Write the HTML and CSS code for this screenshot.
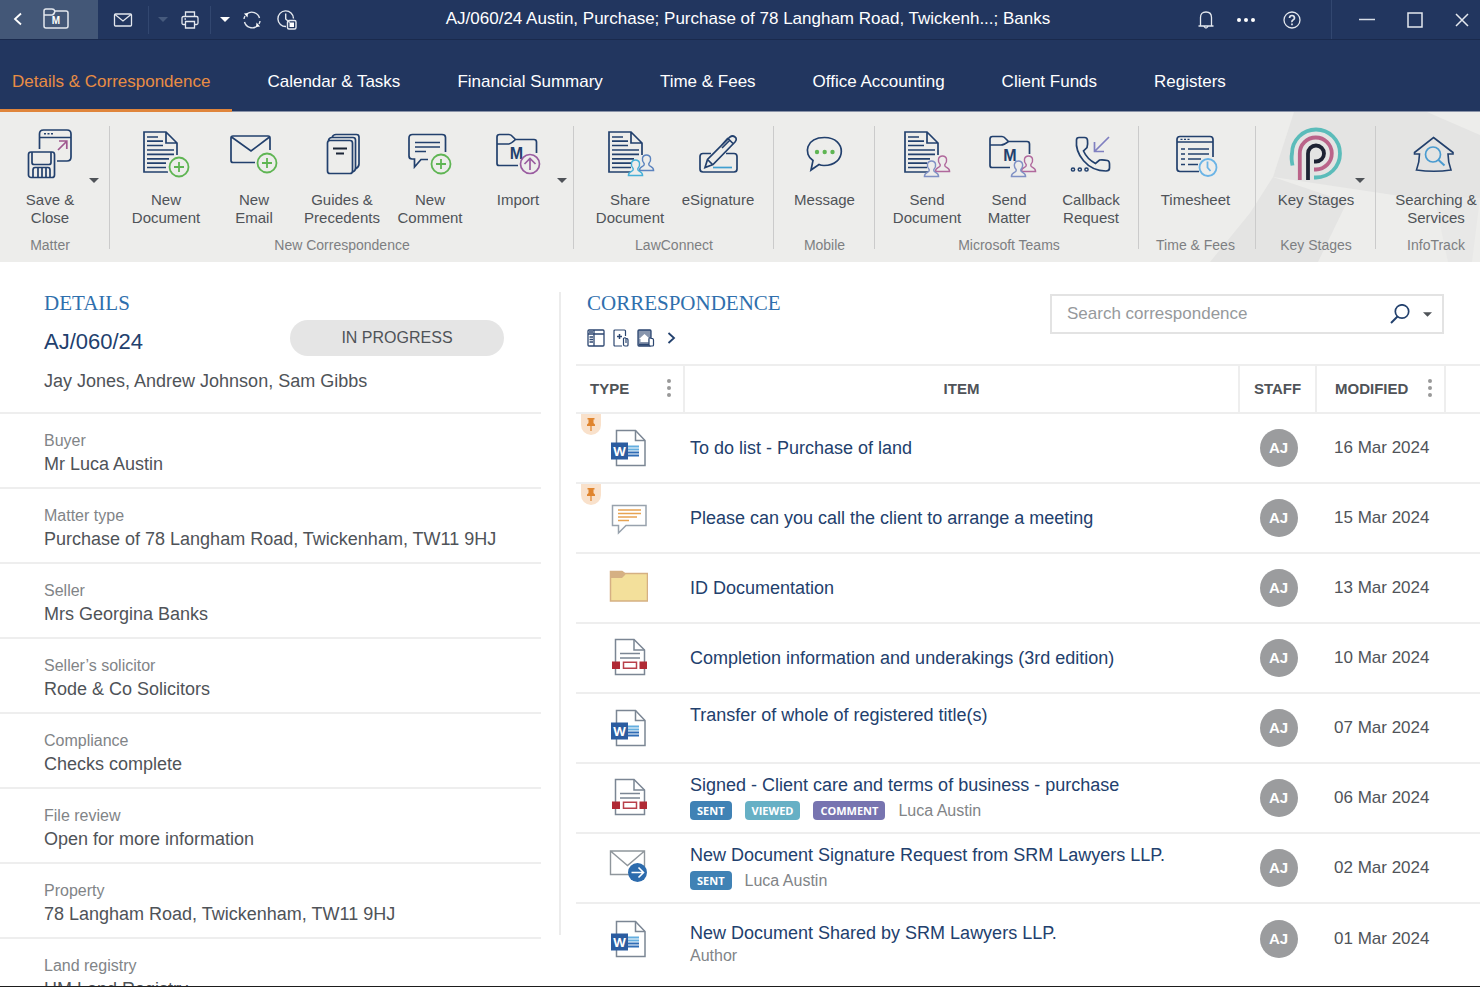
FILE: index.html
```html
<!DOCTYPE html>
<html lang="en">
<head>
<meta charset="utf-8">
<meta name="viewport" content="width=device-width, initial-scale=1">
<title>AJ/060/24 Austin, Purchase</title>
<link rel="stylesheet" href="styles.css">
</head>
<body>
<svg class="sprite" aria-hidden="true">
  <symbol id="caret" viewBox="0 0 10 5"><path d="M0 0H10L5 5Z" fill="currentColor"/></symbol>
  <symbol id="dots" viewBox="0 0 4 20"><g fill="#999"><circle cx="2" cy="3" r="2"/><circle cx="2" cy="10" r="2"/><circle cx="2" cy="17" r="2"/></g></symbol>
  <symbol id="page" viewBox="0 0 56 56"><g fill="none" stroke="#22406d" stroke-width="1.700"><path d="M30 46H6V6H28L39 17V29M28 6V17H39"/><path d="M9 11H20M9 15.200H25M9 19.500H25M9 24H36M9 28.400H36M9 32.800H31M9 37.200H28M9 41.500H28"/></g></symbol>
  <symbol id="plus" viewBox="0 0 22 22"><g fill="none" stroke="#5fb553" stroke-width="1.800"><circle cx="11" cy="11" r="9.500"/><path d="M11 6V16M6 11H16"/></g></symbol>
  <symbol id="person" viewBox="0 0 18 20"><path d="M6.500 12.500V11C3.500 8 4 2 9 2S14.500 8 11.500 11V12.500C12 14.500 16.500 14 16.500 18.500H1.500C1.500 14 6 14.500 6.500 12.500Z" fill="#ededeb" stroke="currentColor" stroke-width="1.500"/></symbol>
  <symbol id="word" viewBox="0 0 40 40"><path d="M8.500 2.500H27.500L37 12.500V37.500H8.500Z" fill="#fff" stroke="#7b8694" stroke-width="1.500"/><path d="M27.500 2.500V12.500H37" fill="none" stroke="#7b8694" stroke-width="1.500"/><path d="M20 18.500H31M20 21.500H31" stroke="#64aee0" stroke-width="1.800"/><path d="M20 24.500H31M20 27.500H31" stroke="#2f6cb5" stroke-width="1.800"/><path d="M3 14.500H20V31.500H3Z" fill="#2b5ca0"/><text x="11.500" y="27.500" text-anchor="middle" class="glyph-w">W</text></symbol>
  <symbol id="pdf" viewBox="0 0 40 40"><path d="M7.500 1.500H26L36.500 12V36.500H7.500Z" fill="#fff" stroke="#7b8694" stroke-width="1.500"/><path d="M26 1.500V12H36.500M12 15.500H32M12 20H32" fill="none" stroke="#7b8694" stroke-width="1.500"/><path d="M4 23.500H12V31H4ZM31.500 23.500H39V31H31.500Z" fill="#b02a35"/><path d="M15.500 24.200H28.500V30.200H15.500Z" fill="#fff" stroke="#b9404a" stroke-width="1.500"/></symbol>
  <symbol id="pin" viewBox="0 0 20 21"><path d="M0 0H20V11A10 10 0 0 1 0 11Z" fill="#f9e1cb"/><path d="M6.500 4H13.500V5.500H12.500V9L14 10.500V12H6V10.500L7.500 9V5.500H6.500ZM9.400 12H10.600V17H9.400Z" fill="#e0852f"/></symbol>
</svg>

<header class="titlebar">
  <div class="tools">
    <div class="matter-tab">
      <button class="tool back" aria-label="Back"><svg width="10" height="14" viewBox="0 0 10 14"><path d="M8 1.500L2 7l6 5.500" fill="none" stroke="#fff" stroke-width="1.800"/></svg></button>
      <button class="tool matter" aria-label="Matter"><svg width="26" height="22" viewBox="0 0 26 22"><g fill="none" stroke="#e4e8ee" stroke-width="1.500"><path d="M1 7V3Q1 1 3 1H9Q11 1 12 3H23Q25 3 25 5V18Q25 20 23 20H3Q1 20 1 18V7H9Q11 7 12 3"/></g><text x="13" y="16" text-anchor="middle" class="glyph-m small">M</text></svg></button>
    </div>
    <button class="tool mail" aria-label="Email"><svg width="20" height="14" viewBox="0 0 20 14"><g fill="none" stroke="#e4e8ee" stroke-width="1.300"><rect x="1.500" y="1" width="17" height="12" rx="1"/><path d="M2 1.500l8 6.500 8-6.500"/></g></svg></button>
    <span class="rule"></span>
    <button class="tool menu dim" aria-label="Email options"><svg width="10" height="5"><use href="#caret"/></svg></button>
    <button class="tool" aria-label="Print"><svg width="18" height="18" viewBox="0 0 18 18"><g fill="none" stroke="#e4e8ee" stroke-width="1.300"><path d="M4.500 5.500V1h9v4.500M4 13.500H2.500Q1 13.500 1 12V7q0-1.500 1.500-1.500h13Q17 5.500 17 7v5q0 1.500-1.500 1.500H14M4.500 10.500h9v6.500h-9zM3.500 8h1.500"/></g></svg></button>
    <span class="rule spaced"></span>
    <button class="tool" aria-label="Print options"><svg width="10" height="5"><use href="#caret"/></svg></button>
    <button class="tool" aria-label="Refresh"><svg width="20" height="20" viewBox="0 0 20 20"><g fill="none" stroke="#e4e8ee" stroke-width="1.400"><path d="M5 3.800A8 8 0 0 1 17.500 8M15 16.200A8 8 0 0 1 2.500 12M2 9A8 8 0 0 1 3 6M18 11A8 8 0 0 1 17 14"/></g><path d="M2 3.500l4-.5-.5 4.500zM18 16.500l-4 .5.500-4.500z" fill="#fff"/></svg></button>
    <button class="tool timer" aria-label="Timer"><svg width="20" height="20" viewBox="0 0 20 20"><g fill="none" stroke="#e4e8ee" stroke-width="1.400"><path d="M9 16.500A7.800 7.800 0 1 1 16.500 8.500M8.700 3.500V9l4 3.500"/><rect x="10.500" y="10.500" width="8.500" height="8.500" rx="1.500"/></g><path d="M12.500 12.500h4.500V17h-4.500z" fill="#fff"/></svg></button>
  </div>
  <h1 class="window-title">AJ/060/24 Austin, Purchase; Purchase of 78 Langham Road, Twickenh...; Banks</h1>
  <div class="tools end">
    <button class="tool bell" aria-label="Notifications"><svg width="16" height="18" viewBox="0 0 16 18"><g fill="none" stroke="#e4e8ee" stroke-width="1.300"><path d="M2.500 15V6.500Q2.500 1 8 1t5.500 5.500V15M.5 15h15M6 15.500q2 3 4 0"/></g></svg></button>
    <button class="tool wide" aria-label="More"><svg width="18" height="4" viewBox="0 0 18 4"><g fill="#fff"><circle cx="2" cy="2" r="2"/><circle cx="9" cy="2" r="2"/><circle cx="16" cy="2" r="2"/></g></svg></button>
    <button class="tool wide" aria-label="Help"><svg width="18" height="18" viewBox="0 0 18 18"><g fill="none" stroke="#e4e8ee"><circle cx="9" cy="9" r="8" stroke-width="1.300"/><path d="M6.500 7q.2-2.500 2.500-2.500T11.500 7Q11.500 8.200 10 9T9 11.200M9 12.500v1.800" stroke-width="1.700"/></g></svg></button>
    <span class="rule full"></span>
    <button class="tool wide" aria-label="Minimise"><svg width="16" height="16" viewBox="0 0 16 16"><path d="M0 7.500h16" stroke="#d8dee7" stroke-width="1.500"/></svg></button>
    <button class="tool max" aria-label="Maximise"><svg width="16" height="16" viewBox="0 0 16 16"><path d="M1 1h14v14H1z" fill="none" stroke="#e4e8ee" stroke-width="1.500"/></svg></button>
    <button class="tool close" aria-label="Close"><svg width="14" height="14" viewBox="0 0 14 14"><path d="M1 1l12 12M13 1L1 13" stroke="#e4e8ee" stroke-width="1.500"/></svg></button>
  </div>
</header>

<nav class="tabs" aria-label="Matter sections">
  <a class="tab active" href="#details" aria-current="page">Details &amp; Correspondence</a>
  <a class="tab" href="#calendar">Calendar &amp; Tasks</a>
  <a class="tab" href="#financial">Financial Summary</a>
  <a class="tab" href="#time">Time &amp; Fees</a>
  <a class="tab" href="#office">Office Accounting</a>
  <a class="tab" href="#client">Client Funds</a>
  <a class="tab" href="#registers">Registers</a>
</nav>

<section class="ribbon" aria-label="Ribbon">
  <svg class="ribbon-art" width="270" height="150" viewBox="0 0 270 150" aria-hidden="true"><g fill="#e4e4e3"><path d="M84 0H217L270 23V88L190 84 63 65Z"/><path d="M63 65L137 90 108 150H0L40 101Z"/><path d="M224 84L270 86 262 150H238Z" fill="#e8e8e7"/></g></svg>

  <div class="group g-matter">
    <div class="actions">
      <div class="action">
        <button class="action-main"><svg width="56" height="56" viewBox="0 0 56 56"><g fill="none" stroke="#22406d" stroke-width="1.700"><path d="M17.500 23V8Q17.500 4 21.500 4H45Q49 4 49 8V31Q49 35 45 35H35M18 11.500H48.500"/><path d="M22 7.800H31" stroke-dasharray="2 1.500" stroke-width="1.400"/><rect x="6.500" y="26" width="26" height="25.500" rx="2.500"/><path d="M10 26V36.500Q10 38.500 12 38.500H27Q29 38.500 29 36.500V26M11 51V44Q11 41.500 13 41.500H26Q28 41.500 28 44V51M16 42V51M20 42V51M24 42V51"/></g><path d="M36 24L44.500 15.500M37 15H44.800V23" fill="none" stroke="#a0588f" stroke-width="1.700"/></svg><span>Save &amp;<br>Close</span></button>
        <button class="drop" aria-label="Save options"><svg width="10" height="5"><use href="#caret"/></svg></button>
      </div>
    </div>
    <p class="group-name">Matter</p>
  </div>

  <div class="group">
    <div class="actions">
      <div class="action"><button class="action-main"><svg width="56" height="56" viewBox="0 0 56 56"><use href="#page" width="56" height="56"/><circle cx="41" cy="41" r="12" fill="#ededeb"/><use href="#plus" x="30" y="30" width="22" height="22"/></svg><span>New<br>Document</span></button></div>
      <div class="action"><button class="action-main"><svg width="56" height="56" viewBox="0 0 56 56"><path d="M29 36.500H7Q5 36.500 5 34.500V12Q5 10 7 10H42Q44 10 44 12V24M5.500 11L25 25 43.500 11" fill="none" stroke="#22406d" stroke-width="1.700"/><use href="#plus" x="30" y="26" width="22" height="22"/></svg><span>New<br>Email</span></button></div>
      <div class="action"><button class="action-main"><svg width="56" height="56" viewBox="0 0 56 56"><g fill="none" stroke="#22406d" stroke-width="1.700"><rect x="13.500" y="14.500" width="25" height="33" rx="2.500"/><path d="M14.500 14.500Q15 11.500 18 11.500H39Q41.500 11.500 41.500 14V42Q41.500 45 38.500 46M18 11.500Q19 8.500 22 8.500H42.500Q45 8.500 45 11V38Q45 41 41.500 43"/></g><path d="M19 22.500H33M22 27.500H30" stroke="#1b2536" stroke-width="1.800"/></svg><span>Guides &amp;<br>Precedents</span></button></div>
      <div class="action"><button class="action-main"><svg width="56" height="56" viewBox="0 0 56 56"><path d="M43.500 26V11.500Q43.500 8.500 40 8.500H10.500Q7 8.500 7 12V30Q7 33 10 33H12.500V41L19 33.500H26M13 16.500H38M13 21H38M13 25.500H24" fill="none" stroke="#22406d" stroke-width="1.700"/><use href="#plus" x="28" y="27" width="22" height="22"/></svg><span>New<br>Comment</span></button></div>
      <div class="action">
        <button class="action-main"><svg width="56" height="56" viewBox="0 0 56 56"><path d="M28 39.500H9Q7 39.500 7 37.500V11Q7 8.500 9.500 8.500H19Q21 8.500 23 11L25.500 13.500H44Q46.500 13.500 46.500 16V27M7 18H18Q21 18 25.500 13.500" fill="none" stroke="#22406d" stroke-width="1.700"/><text x="26.500" y="32.500" text-anchor="middle" class="glyph-m">M</text><circle cx="40" cy="38" r="9.500" fill="#ededeb" stroke="#9a5ca0" stroke-width="1.700"/><path d="M40 44V32.500M34.500 38L40 32.500 45.500 38" fill="none" stroke="#9a5ca0" stroke-width="1.700"/></svg><span>Import</span></button>
        <button class="drop" aria-label="Import options"><svg width="10" height="5"><use href="#caret"/></svg></button>
      </div>
    </div>
    <p class="group-name">New Correspondence</p>
  </div>

  <div class="group">
    <div class="actions">
      <div class="action"><button class="action-main"><svg width="56" height="56" viewBox="0 0 56 56"><use href="#page" x="1" width="56" height="56"/><use href="#person" x="36" y="27" width="17" height="19" color="#5b83be"/><use href="#person" x="25" y="32" width="17" height="19" color="#45b0d8"/></svg><span>Share<br>Document</span></button></div>
      <div class="action"><button class="action-main"><svg width="56" height="56" viewBox="0 0 56 56"><g fill="none" stroke="#22406d" stroke-width="1.700"><path d="M21 27.500H13Q10 27.500 10 30.500V43Q10 46 13 46H44Q47 46 47 43V30.500Q47 27.500 44 27.500H36"/><path d="M15 41.500L17.500 33.500 40 11Q42.500 9 45 11T45 16L23 38.500ZM17.500 33.500L22.500 38.500M30 21L38 12M38 12.500L43 17.500M32 22L40 14"/></g><path d="M23 41.500H42" stroke="#3f9fd0" stroke-width="1.700"/></svg><span>eSignature</span></button></div>
    </div>
    <p class="group-name">LawConnect</p>
  </div>

  <div class="group">
    <div class="actions">
      <div class="action"><button class="action-main"><svg width="56" height="56" viewBox="0 0 56 56"><path d="M16 34.500C6 28 9 11.500 27.500 11.500C50 11.500 50 39.500 27 39.500Q24 39.500 22 38.500L14 44Z" fill="none" stroke="#22406d" stroke-width="1.700"/><g fill="#5fb553"><circle cx="20" cy="26" r="2.200"/><circle cx="27.700" cy="26" r="2.200"/><circle cx="35.500" cy="26" r="2.200"/></g></svg><span>Message</span></button></div>
    </div>
    <p class="group-name">Mobile</p>
  </div>

  <div class="group g-teams">
    <div class="actions">
      <div class="action"><button class="action-main"><svg width="56" height="56" viewBox="0 0 56 56"><use href="#page" width="56" height="56"/><use href="#person" x="35" y="28" width="17" height="19" color="#b0689c"/><use href="#person" x="24" y="33" width="17" height="19" color="#7f90c4"/></svg><span>Send<br>Document</span></button></div>
      <div class="action"><button class="action-main"><svg width="56" height="56" viewBox="0 0 56 56"><path d="M29 41.500H11Q9 41.500 9 39.500V13Q9 10.500 11.500 10.500H21Q23 10.500 25 13L27.500 15.500H46Q48.500 15.500 48.500 18V28M9 19H20Q23 19 27.500 15.500" fill="none" stroke="#22406d" stroke-width="1.700"/><text x="29" y="35" text-anchor="middle" class="glyph-m">M</text><use href="#person" x="39" y="28" width="17" height="19" color="#b0689c"/><use href="#person" x="29" y="33" width="17" height="19" color="#7f90c4"/></svg><span>Send<br>Matter</span></button></div>
      <div class="action"><button class="action-main"><svg width="56" height="56" viewBox="0 0 56 56"><path d="M16 11.500H21.500Q24.500 11.500 24.500 14.500Q25 18 24 21.500L20.500 25Q24 33 32.500 37.500L36.500 34Q40 33.500 44.500 34.500Q46.500 35 46.500 38V42Q46.500 45 43 45C24 45 12 28 13.500 14Q13.500 11.500 16 11.500Z" fill="none" stroke="#22406d" stroke-width="1.700"/><path d="M46 11L32 25M31.500 16V25.500H41" fill="none" stroke="#7f7fc0" stroke-width="1.700"/><g fill="none" stroke="#22406d" stroke-width="1.500"><circle cx="10" cy="43.500" r="1.600"/><circle cx="16.800" cy="43.500" r="1.600"/><circle cx="23.500" cy="43.500" r="1.600"/></g></svg><span>Callback<br>Request</span></button></div>
    </div>
    <p class="group-name">Microsoft Teams</p>
  </div>

  <div class="group g-time">
    <div class="actions">
      <div class="action"><button class="action-main"><svg width="56" height="56" viewBox="0 0 56 56"><g fill="none" stroke="#22406d" stroke-width="1.700"><path d="M31 45.500H12Q9 45.500 9 42.500V13.500Q9 10.500 12 10.500H42Q45 10.500 45 13.500V31M9 16H45"/><path d="M12.500 13.300H22" stroke-dasharray="2 1.500" stroke-width="1.300"/><path d="M13 23H17M20 23H41M13 28H17M20 28H41M13 33H17M20 33H33M13 38.500H17M20 38.500H30"/></g><circle cx="40" cy="41.500" r="8.500" fill="#ededeb" stroke="#6bb4e6" stroke-width="1.800"/><path d="M39.500 35.500V41.500L42.500 45" fill="none" stroke="#6bb4e6" stroke-width="1.800"/></svg><span>Timesheet</span></button></div>
    </div>
    <p class="group-name">Time &amp; Fees</p>
  </div>

  <div class="group">
    <div class="actions">
      <div class="action">
        <button class="action-main"><svg width="56" height="56" viewBox="0 0 56 56"><g fill="none" stroke-width="3.800"><path d="M4.500 39.500Q3 32 4 27.500A24 24 0 1 1 28 51.500H26" stroke="#5bbcba"/><path d="M11.800 54V27.500A16 16 0 1 1 28 43.500H26" stroke="#ba6389"/><path d="M20 54V27.500A8 8 0 1 1 28 35.500H26" stroke="#1d2233"/></g></svg><span>Key Stages</span></button>
        <button class="drop" aria-label="Key stage options"><svg width="10" height="5"><use href="#caret"/></svg></button>
      </div>
    </div>
    <p class="group-name">Key Stages</p>
  </div>

  <div class="group g-info">
    <div class="actions">
      <div class="action"><button class="action-main"><svg width="56" height="56" viewBox="0 0 56 56"><path d="M25.500 11.500L45 26.500V28H40Q40 36 43 44Q26 46.500 8.500 44Q11.500 36 11.500 28H6.500V26.500Z" fill="none" stroke="#22406d" stroke-width="1.600"/><circle cx="25" cy="28.500" r="7.500" fill="none" stroke="#4a9bd0" stroke-width="1.700"/><path d="M30.500 34L36.500 39.500" stroke="#4a9bd0" stroke-width="2"/></svg><span>Searching &amp;<br>Services</span></button></div>
    </div>
    <p class="group-name">InfoTrack</p>
  </div>
</section>

<main class="workspace">
  <section class="details" id="details">
    <div class="summary">
      <h2 class="section-title">DETAILS</h2>
      <div class="matter-line"><strong class="matter-no">AJ/060/24</strong><span class="status">IN PROGRESS</span></div>
      <p class="people">Jay Jones, Andrew Johnson, Sam Gibbs</p>
    </div>
    <dl class="facts">
      <div class="fact"><dt>Buyer</dt><dd>Mr Luca Austin</dd></div>
      <div class="fact"><dt>Matter type</dt><dd>Purchase of 78 Langham Road, Twickenham, TW11 9HJ</dd></div>
      <div class="fact"><dt>Seller</dt><dd>Mrs Georgina Banks</dd></div>
      <div class="fact"><dt>Seller’s solicitor</dt><dd>Rode &amp; Co Solicitors</dd></div>
      <div class="fact"><dt>Compliance</dt><dd>Checks complete</dd></div>
      <div class="fact"><dt>File review</dt><dd>Open for more information</dd></div>
      <div class="fact"><dt>Property</dt><dd>78 Langham Road, Twickenham, TW11 9HJ</dd></div>
      <div class="fact"><dt>Land registry</dt><dd>HM Land Registry</dd></div>
    </dl>
  </section>
  <div class="divider"></div>
  <section class="correspondence">
    <div class="list-head">
      <div>
        <h2 class="section-title">CORRESPONDENCE</h2>
        <div class="view-tools">
          <button aria-label="Layout"><svg width="18" height="18" viewBox="0 0 18 18"><g fill="none" stroke="#2c4670" stroke-width="1.300"><rect x="1" y="1" width="16" height="16" rx="1"/><path d="M1 5H17M7 1V17M2 3H6M2.500 8H6M2.500 10.500H6M2.500 13H6"/></g></svg></button>
          <button aria-label="Add document"><svg width="16" height="18" viewBox="0 0 16 18"><g fill="none" stroke="#2c4670" stroke-width="1.200"><path d="M9 17H2Q1 17 1 16V2Q1 1 2 1H11.500Q12.500 1 12.500 2V7"/><path d="M6.500 5V10M4 7.500H9" stroke-width="1.500"/><path d="M10.500 15.500V9.500Q12 8 13 9.500H14Q15 10 15 11V16Q15 17 14 17H12Q10.500 17 10.500 15.500M13 9.500V14"/></g></svg></button>
          <button aria-label="Home folder"><svg width="18" height="18" viewBox="0 0 18 18"><rect x="1" y="1" width="13" height="16" rx="1" fill="#8795ad" stroke="#2c4670" stroke-width="1.300"/><path d="M7.500 5L13 10H11.500V13H3.500V10H2Z" fill="#fff"/><path d="M2 15.500H12" stroke="#2c4670" stroke-width="1.500"/><path d="M12 15.500V9.500Q13 8 14 9.500H15.500Q16.500 10 16.500 11V16Q16.500 17 15.500 17H13.500Q12 17 12 15.500Z" fill="#fff" stroke="#2c4670" stroke-width="1.200"/></svg></button>
          <button class="more" aria-label="More views"><svg width="9" height="12" viewBox="0 0 9 12"><path d="M1.500 1L7 6l-5.500 5" fill="none" stroke="#22406d" stroke-width="1.800"/></svg></button>
        </div>
      </div>
      <form class="search" role="search">
        <input type="text" placeholder="Search correspondence" aria-label="Search correspondence">
        <button type="button" aria-label="Search"><svg width="20" height="20" viewBox="0 0 20 20"><circle cx="12" cy="7.500" r="6.700" fill="none" stroke="#22406d" stroke-width="1.700"/><path d="M7.500 12.500L1 19" stroke="#22406d" stroke-width="2"/></svg></button>
        <button type="button" aria-label="Search options"><svg width="9" height="5"><use href="#caret"/></svg></button>
      </form>
    </div>

    <table class="items">
      <colgroup><col class="c-type"><col><col class="c-staff"><col class="c-date"><col class="c-end"></colgroup>
      <thead>
        <tr>
          <th scope="col"><div class="th-flex type">TYPE<button aria-label="Type column menu"><svg width="4" height="20"><use href="#dots"/></svg></button></div></th>
          <th scope="col">ITEM</th>
          <th scope="col">STAFF</th>
          <th scope="col"><div class="th-flex modified">MODIFIED<button aria-label="Modified column menu"><svg width="4" height="20"><use href="#dots"/></svg></button></div></th>
          <td></td>
        </tr>
      </thead>
      <tbody>
        <tr><td class="kind"><svg class="pin" width="20" height="21"><use href="#pin"/></svg><svg width="40" height="40"><use href="#word"/></svg></td><td class="item"><a href="#i1">To do list - Purchase of land</a></td><td class="staff"><span class="avatar">AJ</span></td><td class="date">16 Mar 2024</td><td></td></tr>
        <tr><td class="kind"><svg class="pin" width="20" height="21"><use href="#pin"/></svg><svg width="40" height="40" viewBox="0 0 40 40"><path d="M4.500 7.500H38V27.500H18L10.500 35V27.500H4.500Z" fill="#fff" stroke="#98a2ad" stroke-width="1.500"/><path d="M10 12H33M10 15.500H33M10 19H29M10 22.500H21" stroke="#e7a352" stroke-width="1.500"/></svg></td><td class="item"><a href="#i2">Please can you call the client to arrange a meeting</a></td><td class="staff"><span class="avatar">AJ</span></td><td class="date">15 Mar 2024</td><td></td></tr>
        <tr><td class="kind"><svg width="40" height="40" viewBox="0 0 40 40"><path d="M2.500 33V3.500H14L17 5.500H39.500V33Z" fill="#f3e09b" stroke="#d5b083" stroke-width="1.500"/><path d="M2 10V3H14L17.500 6.500 14 10Z" fill="#d5b083"/></svg></td><td class="item"><a href="#i3">ID Documentation</a></td><td class="staff"><span class="avatar">AJ</span></td><td class="date">13 Mar 2024</td><td></td></tr>
        <tr><td class="kind"><svg width="40" height="40"><use href="#pdf"/></svg></td><td class="item"><a href="#i4">Completion information and underakings (3rd edition)</a></td><td class="staff"><span class="avatar">AJ</span></td><td class="date">10 Mar 2024</td><td></td></tr>
        <tr><td class="kind"><svg width="40" height="40"><use href="#word"/></svg></td><td class="item tagged"><a href="#i5">Transfer of whole of registered title(s)</a><div class="meta"></div></td><td class="staff"><span class="avatar">AJ</span></td><td class="date">07 Mar 2024</td><td></td></tr>
        <tr><td class="kind"><svg width="40" height="40"><use href="#pdf"/></svg></td><td class="item tagged"><a href="#i6">Signed - Client care and terms of business - purchase</a><div class="meta"><span class="tag sent">SENT</span><span class="tag viewed">VIEWED</span><span class="tag comment">COMMENT</span><span class="by">Luca Austin</span></div></td><td class="staff"><span class="avatar">AJ</span></td><td class="date">06 Mar 2024</td><td></td></tr>
        <tr><td class="kind"><svg width="40" height="40" viewBox="0 0 40 40"><path d="M2.500 3H36.500V26.500H2.500ZM2.500 3L19.500 17.500 36.500 3" fill="#fff" stroke="#8f969c" stroke-width="1.400"/><circle cx="29.500" cy="24.500" r="9.500" fill="#2c6bad"/><path d="M23.500 24.500H35M30.500 19.500L35.500 24.500 30.500 29.500" fill="none" stroke="#fff" stroke-width="1.600"/></svg></td><td class="item tagged"><a href="#i7">New Document Signature Request from SRM Lawyers LLP.</a><div class="meta"><span class="tag sent">SENT</span><span class="by">Luca Austin</span></div></td><td class="staff"><span class="avatar">AJ</span></td><td class="date">02 Mar 2024</td><td></td></tr>
        <tr><td class="kind"><svg width="40" height="40"><use href="#word"/></svg></td><td class="item authored"><a href="#i8">New Document Shared by SRM Lawyers LLP.</a><div class="author">Author</div></td><td class="staff"><span class="avatar">AJ</span></td><td class="date">01 Mar 2024</td><td></td></tr>
      </tbody>
    </table>
  </section>
</main>
</body>
</html>
```
FILE: styles.css
```css
*, *::before, *::after { box-sizing: border-box; }

body {
  margin: 0;
  height: 100vh;
  display: flex;
  flex-direction: column;
  overflow: hidden;
  background: #fff;
  border-bottom: 1px solid #1d1d1d;
  color: #4f5358;
  font-family: "Liberation Sans", Arial, sans-serif;
  font-size: 18px;
}

h1, h2, p, dl, dd { margin: 0; }
button { margin: 0; padding: 0; border: 0; background: none; color: inherit; font: inherit; cursor: pointer; }
a { color: inherit; text-decoration: none; }
svg { display: block; flex: none; }
.sprite { display: none; }
.glyph-m { font: bold 16px "Liberation Sans", Arial, sans-serif; fill: #22406d; }
.glyph-m.small { font-size: 10px; fill: #fff; }
.glyph-w { font: bold 13px "Open Sans", sans-serif; fill: #fff; }

/* Title bar */
.titlebar {
  flex: none;
  display: grid;
  grid-template-columns: 1fr auto 1fr;
  height: 40px;
  background: #22365f;
  border-bottom: 1px solid #1a2a4d;
  color: #fff;
}
.tools { display: flex; align-items: center; }
.tools.end { justify-content: flex-end; }
.matter-tab { display: flex; height: 100%; width: 98px; background: #435777; }
.tool { display: flex; align-items: center; justify-content: center; width: 27px; height: 38px; }
.tool.back { width: 36px; }
.tool.matter { width: 40px; }
.tool.mail { width: 50px; }
.tool.timer { width: 44px; }
.tool.bell { width: 34px; }
.tool.wide { width: 46px; }
.tool.max { width: 50px; }
.tool.close { width: 40px; padding-left: 4px; }
.tool.dim { color: #465a7d; }
.rule { width: 1px; height: 28px; background: #324770; }
.rule.spaced { margin-left: 7px; }
.rule.full { height: 100%; margin: 0 12px 0 16px; }
.window-title { padding-left: 16px; font-size: 17px; font-weight: 400; line-height: 37px; white-space: nowrap; }

/* Section tabs */
.tabs { flex: none; display: flex; gap: 13px; height: 72px; background: #22365f; border-bottom: 1px solid #8a93a8; }
.tab { display: flex; align-items: center; height: 72px; padding: 14px 22px 0; border-bottom: 3px solid transparent; color: #fff; font-size: 17px; white-space: nowrap; }
.tab.active { padding-left: 12px; border-color: #e0853b; color: #e98d44; }

/* Ribbon */
.ribbon {
  position: relative;
  flex: none;
  display: grid;
  grid-template-columns: 110fr 464fr 200fr 101fr 264fr 117fr 120fr 104fr;
  background: #ededeb;
}
.ribbon-art { position: absolute; top: 0; right: 0; }
.group {
  position: relative;
  display: flex;
  flex-direction: column;
  align-items: center;
  min-width: 0;
  padding: 14px 0 8px;
  background: linear-gradient(#cbcbcb, #cbcbcb) no-repeat right 14px / 1px 123px;
}
.g-matter { padding-right: 10px; }
.g-teams { padding-left: 4px; }
.g-time { padding-right: 4px; }
.g-info { padding-left: 16px; background: none; }
.actions { display: flex; flex: 1; min-height: 110px; }
.action { position: relative; width: 88px; }
.g-teams .action { width: 82px; }
.action-main { display: flex; flex-direction: column; align-items: center; gap: 9px; width: 100%; font-size: 15px; line-height: 18px; white-space: nowrap; }
.drop { position: absolute; top: 50px; left: calc(50% + 36px); padding: 2px 3px; }
.group-name { color: #7d7f82; font-size: 14px; line-height: 18px; white-space: nowrap; }

/* Workspace */
.workspace { flex: 1; min-height: 0; display: grid; grid-template: minmax(0, 1fr) / 559fr 2px 919fr; overflow: hidden; }
.divider { margin: 30px 0 51px; background: #ececec; }
.section-title { color: #2f6fad; font: 400 21px/26px "Liberation Serif", "Times New Roman", serif; }

.details { padding-right: 18px; }
.summary { padding: 28px 37px 19px 44px; border-bottom: 2px solid #eee; }
.matter-line { display: flex; justify-content: space-between; margin-top: 4px; }
.matter-no { align-self: flex-end; color: #22406d; font-size: 22px; font-weight: 400; line-height: 28px; }
.status { width: 214px; border-radius: 18px; background: #e5e5e5; font-size: 16px; line-height: 36px; text-align: center; }
.people { margin-top: 13px; line-height: 24px; }
.fact { padding: 16px 0 11px 44px; border-bottom: 2px solid #eee; }
.fact dt { color: #818487; font-size: 16px; line-height: 22px; }
.fact dd { line-height: 24px; white-space: nowrap; }

.correspondence { padding: 28px 0 0 15px; }
.list-head { display: flex; justify-content: space-between; height: 74px; padding: 0 36px 0 11px; }
.view-tools { display: flex; align-items: center; gap: 8px; margin-top: 13px; }
.view-tools .more { margin-left: 4px; }
.search { display: flex; align-items: center; width: 394px; height: 40px; margin-top: 4px; padding-right: 10px; gap: 13px; border: 2px solid #e3e3e3; }
.search input { flex: 1; min-width: 0; height: 100%; padding: 0 0 0 15px; border: 0; outline: 0; color: #4f5358; font: 17px "Liberation Sans", Arial, sans-serif; }
.search input::placeholder { color: #96999c; opacity: 1; }

.items { width: 100%; table-layout: fixed; border-spacing: 0; }
.c-type { width: 109px; }
.c-staff { width: 77px; }
.c-date { width: 129px; }
.c-end { width: 34px; }
.items th, .items td { height: 70px; padding: 0; border-bottom: 2px solid #eee; }
.items thead th, .items thead td { height: 50px; border-top: 2px solid #eee; }
.items tbody tr:last-child td { border-bottom: 0; }
.items thead th { padding-bottom: 2px; border-right: 2px solid #eee; font-size: 15px; font-weight: 700; text-align: center; }
.th-flex { display: flex; align-items: center; justify-content: space-between; }
.th-flex.type { padding: 0 12px 0 14px; }
.th-flex.modified { padding: 0 12px 0 18px; }
.kind { position: relative; }
.kind svg { margin-left: 32px; }
.kind .pin { position: absolute; top: 0; left: 5px; margin: 0; }
.item { white-space: nowrap; }
.items .item { padding-left: 5px; }
.item a { display: block; color: #22406d; line-height: 24px; }
.items .tagged { padding-bottom: 2px; }
.items .authored { padding-top: 10px; }
.author, .by { color: #818487; font-size: 16px; line-height: 22px; }
.meta { display: flex; align-items: center; gap: 13px; height: 22px; margin-top: 3px; }
.tag { padding: 0 7px; border-radius: 4px; color: #fff; font: 700 11px/19px "Open Sans", sans-serif; }
.tag.sent { background: #4082b5; }
.tag.viewed { background: #67b0c5; }
.tag.comment { background: #7774b0; }
.avatar { display: block; width: 38px; margin: 0 auto; border-radius: 50%; background: #9b9c9e; color: #fff; font-size: 15px; font-weight: 700; line-height: 38px; text-align: center; }
.items .date { padding-left: 17px; font-size: 17px; white-space: nowrap; }
```
